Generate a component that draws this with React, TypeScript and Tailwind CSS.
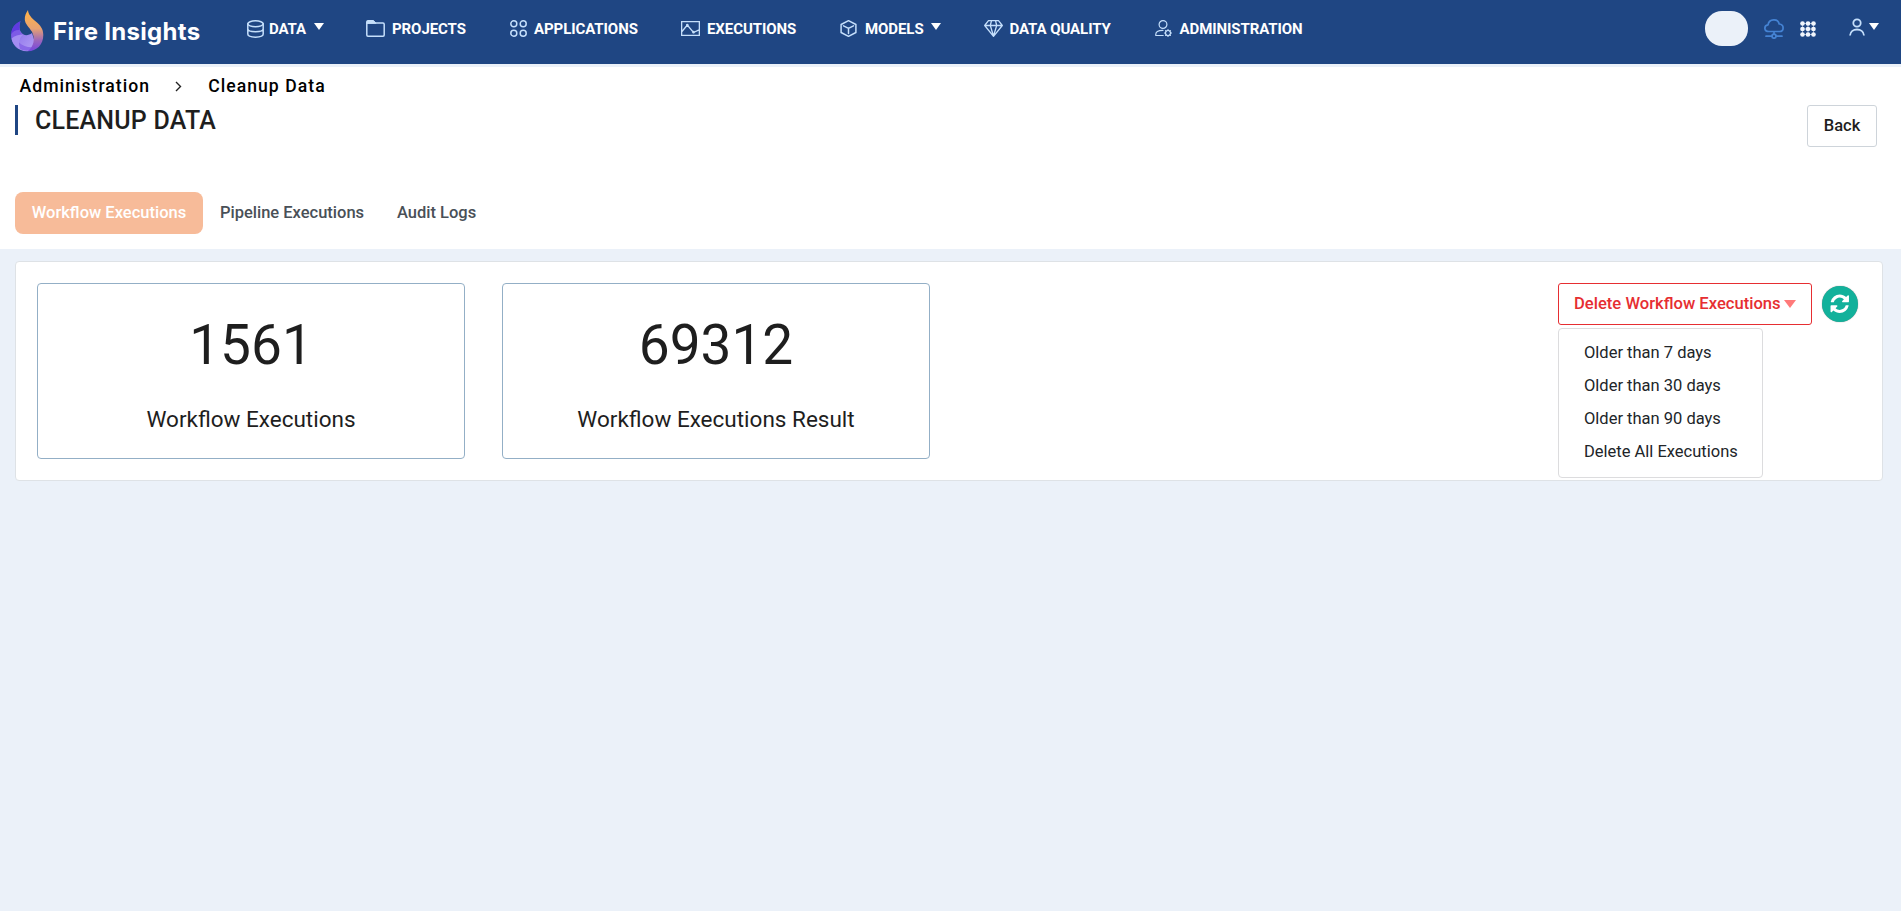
import type { ReactNode } from "react";

function Caret({ className }: { className: string }) {
  return (
    <svg viewBox="0 0 10 7" preserveAspectRatio="none" className={className} fill="currentColor">
      <path d="M0 0h10L5 7z" />
    </svg>
  );
}

function Logo() {
  return (
    <svg width="33" height="42" viewBox="0 0 33 42">
      <defs>
        <linearGradient id="flame" x1="0" y1="0" x2="0" y2="1">
          <stop offset="0.1" stopColor="#fcb04f" />
          <stop offset="0.45" stopColor="#e8a271" />
          <stop offset="0.75" stopColor="#9a64bd" />
          <stop offset="1" stopColor="#7546df" />
        </linearGradient>
        <linearGradient id="bowl" x1="0" y1="0" x2="1" y2="1">
          <stop offset="0" stopColor="#5b35dd" />
          <stop offset="0.5" stopColor="#9b82ee" />
          <stop offset="1" stopColor="#b5a2f6" />
        </linearGradient>
      </defs>
      <path d="M9.500 11.300C3 14 .3 19.500.3 25.500C.6 35 7 41.200 16 41.200C20 41.200 24 39 25 36L21 23C18.500 25 15 25.800 12.500 24.500C8.500 22.500 7.500 17 9.500 11.300Z" fill="url(#bowl)" />
      <path d="M9.500 11.300C3 14 .3 19 .3 24C3 20.500 6 20 8.800 20.500C7.800 17.500 8 14.500 9.500 11.300Z" fill="#5f3be0" />
      <path d="M.3 24C3 20.500 6 20 8.800 20.500C9.500 22.500 10.800 24 12.500 24.500C8 24.500 3.500 26 .5 28.500C.3 27 .2 25.500.3 24Z" fill="#7d5be6" />
      <path d="M.5 28.500C3.500 26 8 24.500 12.500 24.500C8.500 27.500 7.500 32 9 38.800C4.500 36.500 1.200 33 .5 28.500Z" fill="#a48df2" />
      <path d="M8 32.500C12 36.500 18 38 24 37C21 40.500 15 42.500 9 38.800C8.300 36.500 8 34.500 8 32.500Z" fill="#8968e8" />
      <path d="M17 0C17.300 4.500 20.500 8 24.500 11.300C29.500 15.400 32.300 19 32.300 25C32.300 34.500 26 41.200 16.500 41.200C23 37 24.500 28 20.800 21.500C18 17 14 14 13.800 9.500C13.600 6 15 2.800 17 0Z" fill="url(#flame)" />
    </svg>
  );
}

const line = { fill: "none", stroke: "currentColor", strokeWidth: 1.5, strokeLinejoin: "round", strokeLinecap: "round" } as const;

const icons: Record<string, ReactNode> = {
  data: (
    <svg width="17" height="18" viewBox="0 0 17 18" {...line}>
      <ellipse cx="8.500" cy="3.800" rx="7.700" ry="3" />
      <path d="M.8 3.800v10.300c0 4.100 15.400 4.100 15.400 0V3.800M.8 8.800c0 4 15.400 4 15.400 0" />
    </svg>
  ),
  projects: (
    <svg width="19" height="17" viewBox="0 0 19 17" {...line}>
      <path d="M.8 3V15q0 1.200 1.200 1.200H17q1.200 0 1.200-1.200V4.200Q18.200 3 17 3Z" />
      <path d="M.6 3V1.500Q.6.500 1.600.500H7.500L9.700 3Z" fill="currentColor" strokeWidth="1" />
    </svg>
  ),
  applications: (
    <svg width="17" height="17" viewBox="0 0 17 17" {...line}>
      <circle cx="3.800" cy="3.800" r="3" />
      <circle cx="13.200" cy="3.800" r="3" />
      <circle cx="3.800" cy="13.200" r="3" />
      <circle cx="13.200" cy="13.200" r="3" />
    </svg>
  ),
  executions: (
    <svg width="19" height="15" viewBox="0 0 19 15" fill="none" stroke="currentColor" strokeWidth="1.300">
      <path d="M.65.650h17.700v13.700H.65zM1 10.500 6.300 4l6.200 7.500L18 8.800" />
      <circle cx="6.300" cy="4.200" r=".7" />
      <circle cx="12.500" cy="11.200" r=".7" />
    </svg>
  ),
  models: (
    <svg width="17" height="17" viewBox="0 0 17 17" {...line} strokeWidth="1.500">
      <path d="M8.500.7 15.900 4.500v8L8.500 16.300 1.100 12.500v-8ZM3.500 5.800 8.500 8.300l5-2.500M8.500 8.300V13.500" />
    </svg>
  ),
  quality: (
    <svg width="19" height="17" viewBox="0 0 19 17" {...line} strokeWidth="1.300">
      <path d="M4.500.7h10L18.300 5.500 9.500 16.300.7 5.500ZM.7 5.500h17.600M6.300 5.500 9.500 16l3.200-10.500M6.300 5.500 7.500.7M12.700 5.500 11.500.7" />
    </svg>
  ),
  admin: (
    <svg width="17" height="17" viewBox="0 0 17 17" {...line} strokeWidth="1.200">
      <circle cx="8" cy="4.500" r="3.900" />
      <path d="M8.200 15.500H.8C.3 11.800 3 10.300 8 10.300" />
      <circle cx="13" cy="13" r="2.500" />
      <path d="M13 9.500v1M13 15.500v1M9.500 13h1M15.500 13h1M10.600 10.600l.6.600M14.800 14.800l.6.600M10.600 15.400l.6-.6M14.800 11.200l.6-.6" />
    </svg>
  ),
};

function NavItem({ icon, label, className, textClass, caret }: { icon: string; label: string; className: string; textClass: string; caret?: boolean }) {
  return (
    <a className={`flex h-full shrink-0 items-center ${className}`}>
      <span className="shrink-0 text-[#c5dffb]">{icons[icon]}</span>
      <span className={`mt-px whitespace-nowrap ${textClass}`}>{label}</span>
      {caret && <Caret className="mb-[4px] ml-[7.500px] h-[7px] w-[10px] shrink-0" />}
    </a>
  );
}

function Header() {
  return (
    <header className="flex h-16 bg-[#1f4683] text-white">
      <div className="flex w-[247px] shrink-0 items-start pt-[10px] pl-[11px]">
        <Logo />
        <span className="mt-[7px] ml-[9px] font-['Inter'] text-[24px] leading-[30px] font-bold tracking-[0.300px] whitespace-nowrap">Fire Insights</span>
      </div>
      <nav className="flex h-[57px] grow items-center text-[15px] font-bold tracking-[-0.080px]">
        <NavItem icon="data" label="DATA" className="w-[119px]" textClass="ml-[5px]" caret />
        <NavItem icon="projects" label="PROJECTS" className="w-[144px]" textClass="ml-[7px]" />
        <NavItem icon="applications" label="APPLICATIONS" className="w-[171px]" textClass="ml-[7px]" />
        <NavItem icon="executions" label="EXECUTIONS" className="w-[159px]" textClass="ml-[7px]" />
        <NavItem icon="models" label="MODELS" className="w-[144px]" textClass="ml-[8px]" caret />
        <NavItem icon="quality" label="DATA QUALITY" className="w-[171px]" textClass="ml-[6.500px]" />
        <NavItem icon="admin" label="ADMINISTRATION" className="w-[160px]" textClass="ml-[7.500px]" />
      </nav>
      <div className="flex h-[57px] w-[196px] shrink-0 items-center">
        <div className="h-[35px] w-[43px] rounded-[17px] bg-[#ebf1f9]" />
        <svg className="ml-[16px] text-[#4583d3]" width="20" height="20" viewBox="0 0 20 20" {...line} strokeWidth="1.700">
          <path d="M5 12.500C-.5 12.500-.2 6.500 4 5.800 5-.5 14-.8 15.200 5c5.300.5 5 7.500.3 7.500ZM10 12.500v3M2 17.200h5.800M12.200 17.200H18" />
          <circle cx="10" cy="17.200" r="2" />
        </svg>
        <svg className="ml-[16px] text-[#f0f5fc]" width="16" height="16" viewBox="0 0 16 16" fill="currentColor">
          {[2.5, 8, 13.5].map((y) => [2.5, 8, 13.5].map((x) => <circle key={`${x}-${y}`} cx={x} cy={y} r="2.300" />))}
          <path d="M2 2h12v12H2zM3 3v10h10V3zM7.500 2h1v12h-1zM2 7.500h12v1H2z" fillRule="evenodd" opacity=".5" />
        </svg>
        <svg className="mb-[3px] ml-[33px] text-[#c5dffb]" width="16" height="18" viewBox="0 0 16 18" fill="none" stroke="currentColor" strokeWidth="1.800">
          <circle cx="8" cy="5" r="3.700" />
          <path d="M1 17.500c.5-8 13.500-8 14 0" />
        </svg>
        <Caret className="mb-[4px] ml-[4px] h-[7px] w-[10px]" />
      </div>
    </header>
  );
}

function Stat({ value, label }: { value: string; label: string }) {
  return (
    <div className="flex h-[176px] w-[428px] flex-col items-center rounded border border-[#93afc6] text-[#1e1e1e]">
      <div className="mt-[27px] text-[55px] leading-[68px]">{value}</div>
      <div className="mt-[25px] text-[22.500px] leading-[30px]">{label}</div>
    </div>
  );
}

const options = ["Older than 7 days", "Older than 30 days", "Older than 90 days", "Delete All Executions"];

export default function App() {
  return (
    <div className="flex h-[911px] flex-col overflow-hidden bg-[#ebf1f9] font-['Roboto',sans-serif]">
      <Header />
      <section className="mt-[3px] h-[182px] shrink-0 bg-white">
        <div className="flex h-[38px] items-center pl-[19.500px] text-[17.600px] leading-[38px] font-medium tracking-[1.040px] text-black">
          <span>Administration</span>
          <svg className="mr-[26px] ml-[25px] text-[#222]" width="7" height="11" viewBox="0 0 7 11" fill="none" stroke="currentColor" strokeWidth="1.400">
            <path d="m1 1 4.500 4.500L1 10" />
          </svg>
          <span>Cleanup Data</span>
        </div>
        <div className="flex h-[87px] items-start justify-between pr-6 pl-[15px]">
          <h1 className="h-[30px] border-l-[3px] border-[#1f4683] pl-[17px] text-[25px] leading-[31px] font-medium tracking-[0.200px] text-[#1e1e1e]">CLEANUP DATA</h1>
          <button className="h-[42px] w-[70px] rounded-[3px] border border-[#ced4da] text-[16.500px] font-medium text-[#1e1e1e]">Back</button>
        </div>
        <div className="flex h-[42px] pl-[15px] text-[16.500px] font-medium text-[#495057]">
          <button className="w-[188px] rounded-lg bg-[#f7bb99] pt-px text-white">Workflow Executions</button>
          <button className="w-[178px] pt-px">Pipeline Executions</button>
          <button className="w-[111px] pt-px">Audit Logs</button>
        </div>
      </section>
      <main className="mt-3 mr-[18px] ml-[15px] flex h-[220px] shrink-0 items-start rounded border border-[#dee2e6] bg-white pt-[21px] pl-[21px]">
        <div className="flex gap-[37px]">
          <Stat value="1561" label="Workflow Executions" />
          <Stat value="69312" label="Workflow Executions Result" />
        </div>
        <div className="relative mr-[24px] ml-auto flex items-center">
          <button className="flex h-[42px] w-[254px] items-center rounded-[3px] border border-[#e62e32] pl-[15px] text-[16.600px] font-medium whitespace-nowrap text-[#e62e32]">
            Delete Workflow Executions
            <Caret className="ml-[3px] h-[8px] w-[12px] text-[#ff7a7a]" />
          </button>
          <button className="mb-px ml-[10px] flex size-[36px] items-center justify-center rounded-full bg-[#12b19b] text-white shadow-[0_0_1px_#777]">
            <svg width="21.500" height="21.500" viewBox="0 0 1792 1792" fill="currentColor">
              <path d="M1639 1056q0 5-1 7-64 268-268 434.500t-478 166.500q-146 0-282.500-55t-243.500-157l-129 129q-19 19-45 19t-45-19-19-45v-448q0-26 19-45t45-19h448q26 0 45 19t19 45-19 45l-137 137q71 66 161 102t187 36q134 0 250-65t186-179q11-17 53-117 8-23 30-23h192q13 0 22.500 9.500t9.500 22.500zm25-800v448q0 26-19 45t-45 19h-448q-26 0-45-19t-19-45 19-45l138-138q-148-137-349-137-134 0-250 65t-186 179q-11 17-53 117-8 23-30 23h-199q-13 0-22.500-9.500t-9.500-22.500v-7q65-268 270-434.500t480-166.500q146 0 284 55.500t245 156.500l130-129q19-19 45-19t45 19 19 45z" />
            </svg>
          </button>
          <ul className="absolute top-[45px] left-0 h-[150px] w-[205px] rounded border border-[#dcdcde] bg-white pt-[7px] pl-[25px] text-[16.500px] leading-[33px] text-[#212529]">
            {options.map((o) => (
              <li key={o}>{o}</li>
            ))}
          </ul>
        </div>
      </main>
    </div>
  );
}
